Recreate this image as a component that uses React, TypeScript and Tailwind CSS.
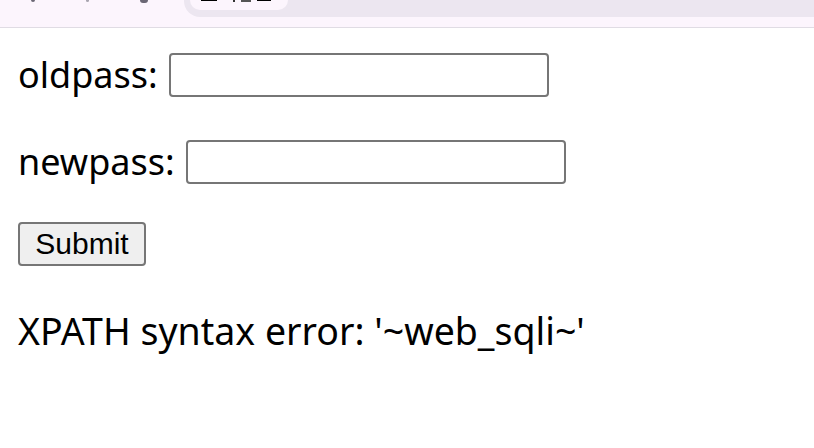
import React from 'react';

const App: React.FC = () => {
  return (
    <div className="w-[814px] h-[448px] bg-white overflow-hidden">
      {/* browser chrome strip, cut off at the top */}
      <div className="flex h-[28px] bg-[#fcf5fd] border-b border-[#e0dce4]">
        <div className="w-[184px] flex items-start pl-[31px] gap-[51px]">
          <span className="w-[4px] h-[2px] rounded-b-full bg-[#6b6775]" />
          <span className="w-[3px] h-[2px] rounded-b-full bg-[#a9a5b0]" />
          <span className="w-[8px] h-[3px] rounded-b-full bg-[#6b6775]" />
        </div>
        <div className="flex-1 h-[17px] bg-[#ece6f0] rounded-bl-[16px] pl-[6px]">
          <div className="w-[98px] h-[10px] bg-[#fcf5fd] rounded-b-[10px] flex items-start pl-[11px] gap-[6px]">
            <span className="w-[16px] h-[1px] bg-black" />
            <span className="ml-[10px] w-[2px] h-[2px] bg-[#333]" />
            <span className="w-[10px] h-[2px] bg-[#555]" />
            <span className="w-[14px] h-[1px] bg-black" />
          </div>
        </div>
      </div>

      <div className="pl-[18px] text-black font-['Noto_Sans',sans-serif] text-[36px]">
        <div className="mt-[25px] flex items-center h-[44px]">
          <label className="leading-none">oldpass:</label>
          <input type="text" className="ml-[11px] w-[380px] h-[44px] border-2 border-[#767676] rounded-[4px] bg-white" />
        </div>

        <div className="mt-[43px] flex items-center h-[44px]">
          <label className="leading-none">newpass:</label>
          <input type="text" className="ml-[11px] w-[380px] h-[44px] border-2 border-[#767676] rounded-[4px] bg-white" />
        </div>

        <button className="mt-[38px] w-[128px] h-[44px] border-2 border-[#767676] rounded-[4px] bg-[#efefef] font-['Liberation_Sans',sans-serif] text-[30px] leading-none">
          Submit
        </button>

        <p className="mt-[41px] leading-[44px] text-[37.5px]">XPATH syntax error: '~web_sqli~'</p>
      </div>
    </div>
  );
};

export default App;
